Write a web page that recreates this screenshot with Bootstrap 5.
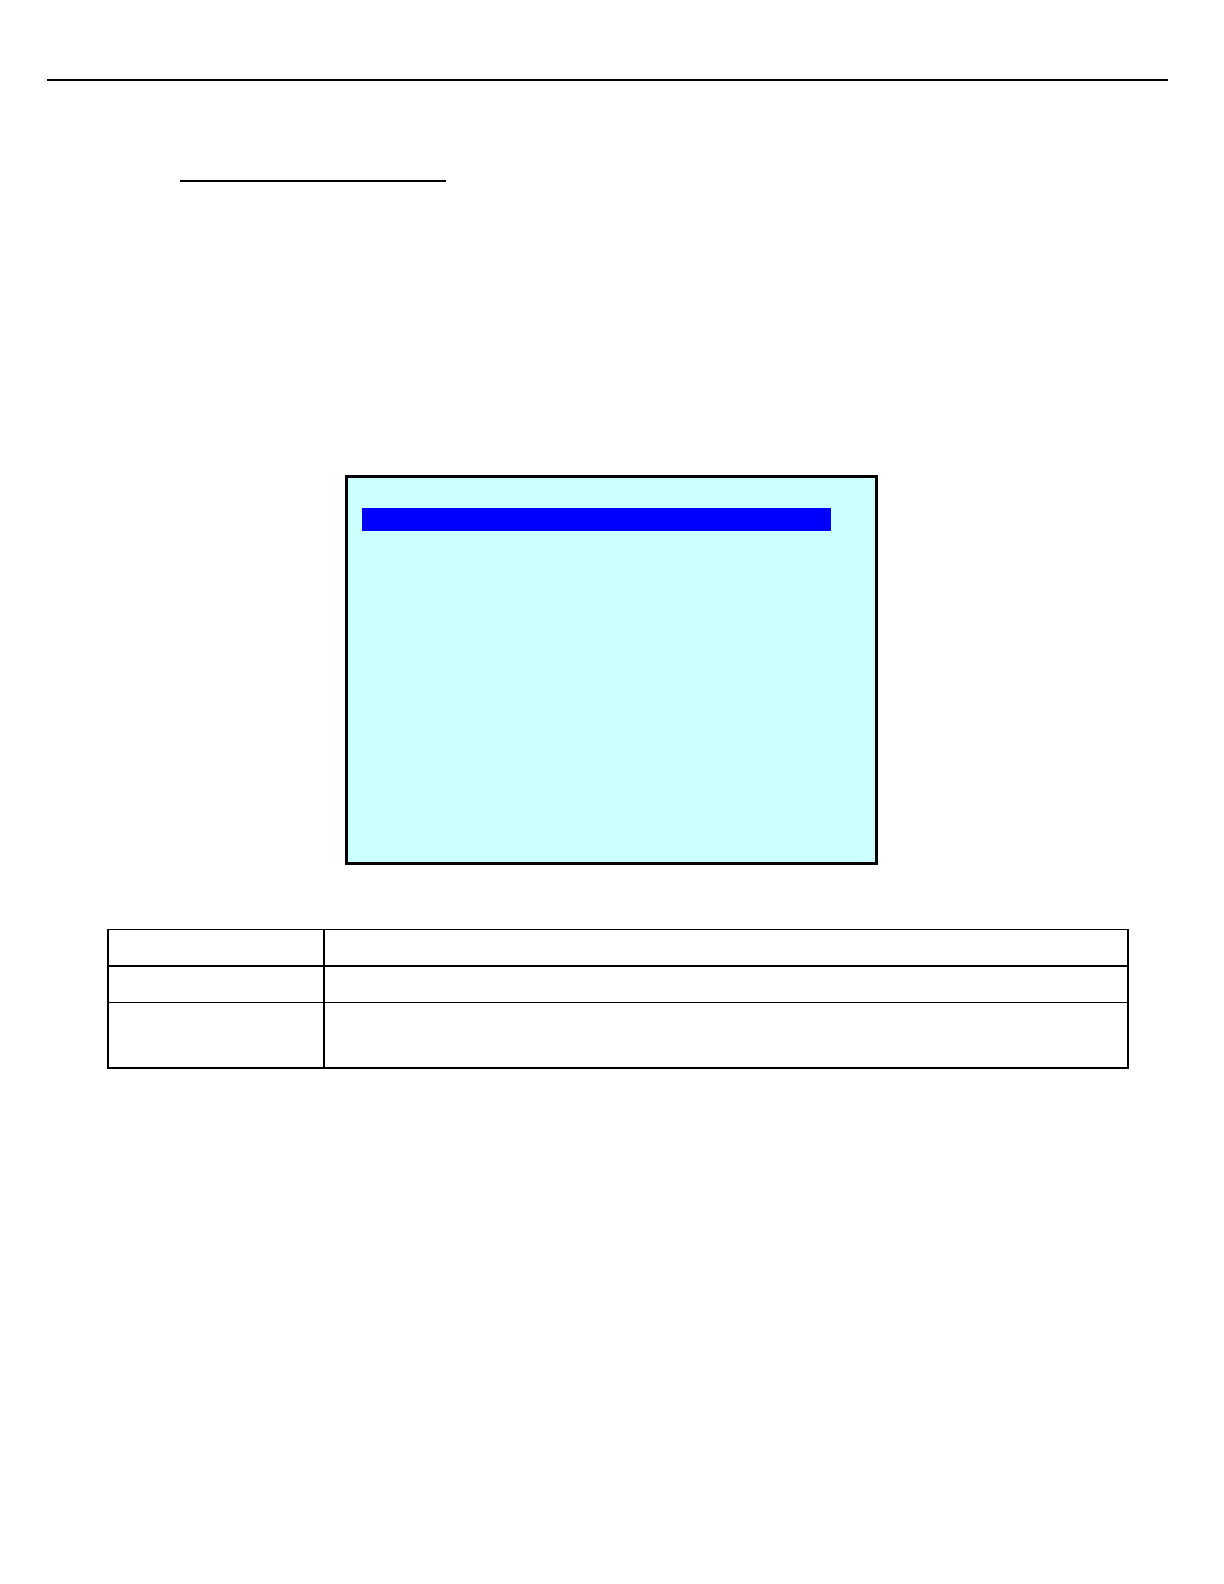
<!DOCTYPE html>
<html lang="en">
<head>
<meta charset="utf-8">
<meta name="viewport" content="width=device-width, initial-scale=1">
<title>Document page</title>
<link href="https://cdn.jsdelivr.net/npm/bootstrap@5.3.0/dist/css/bootstrap.min.css" rel="stylesheet">
<style>
  body { background: #fff; color: #000; font-family: "Liberation Sans", Arial, sans-serif; }
  .page-head { padding: 79px 56px 0 47px; }
  .rule { height: 2px; background: #000; }
  .title-line { width: 266px; margin: 99px 0 0 180px; }
  .screen-wrap { padding: 293px 1px 0 0; }
  .screen { width: 533px; height: 390px; padding: 30px 44px 0 14px; border: 3px solid #000; background: #cff; }
  .selected-row { height: 23px; background: #00f; }
  .table-wrap { padding: 64px 95px 48px 107px; }
  .grid-table { table-layout: fixed; border-collapse: separate; border-spacing: 0; }
  .grid-table th, .grid-table td { padding: 0; border: 0 solid #000; border-right-width: 2px; border-bottom-width: 2px; }
  .grid-table tr > :first-child { border-left-width: 2px; }
  .grid-table thead th { height: 38px; border-top-width: 1px; }
  .grid-table .name-col { width: 218px; }
  .grid-table .short-row > * { height: 36px; border-bottom-width: 1px; }
  .grid-table .tall-row > * { height: 66px; }
</style>
</head>
<body>
<header class="page-head"><div class="rule"></div></header>
<main>
  <div class="rule title-line"></div>
  <section class="screen-wrap d-flex justify-content-center">
    <div class="screen"><div class="selected-row"></div></div>
  </section>
  <section class="table-wrap">
    <table class="grid-table w-100">
      <thead><tr><th class="name-col" scope="col"></th><th scope="col"></th></tr></thead>
      <tbody>
        <tr class="short-row"><td></td><td></td></tr>
        <tr class="tall-row"><td></td><td></td></tr>
      </tbody>
    </table>
  </section>
</main>
<script src="https://cdn.jsdelivr.net/npm/bootstrap@5.3.0/dist/js/bootstrap.bundle.min.js"></script>
</body>
</html>
